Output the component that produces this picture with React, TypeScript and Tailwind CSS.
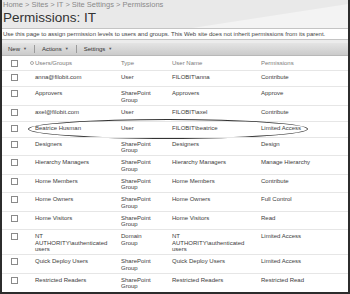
import React from 'react';

const rows = [
  { name: 'anna@filobit.com', type: 'User', user: 'FILOBIT\\anna', perm: 'Contribute' },
  { name: 'Approvers', type: 'SharePoint Group', user: 'Approvers', perm: 'Approve' },
  { name: 'axel@filobit.com', type: 'User', user: 'FILOBIT\\axel', perm: 'Contribute' },
  { name: 'Beatrice Husman', type: 'User', user: 'FILOBIT\\beatrice', perm: 'Limited Access', marked: true },
  { name: 'Designers', type: 'SharePoint Group', user: 'Designers', perm: 'Design' },
  { name: 'Hierarchy Managers', type: 'SharePoint Group', user: 'Hierarchy Managers', perm: 'Manage Hierarchy' },
  { name: 'Home Members', type: 'SharePoint Group', user: 'Home Members', perm: 'Contribute' },
  { name: 'Home Owners', type: 'SharePoint Group', user: 'Home Owners', perm: 'Full Control' },
  { name: 'Home Visitors', type: 'SharePoint Group', user: 'Home Visitors', perm: 'Read' },
  {
    name: 'NT AUTHORITY\\authenticated users',
    type: 'Domain Group',
    user: 'NT AUTHORITY\\authenticated users',
    perm: 'Limited Access',
  },
  { name: 'Quick Deploy Users', type: 'SharePoint Group', user: 'Quick Deploy Users', perm: 'Limited Access' },
  { name: 'Restricted Readers', type: 'SharePoint Group', user: 'Restricted Readers', perm: 'Restricted Read' },
];

function Checkbox() {
  return (
    <div className="w-[28px] shrink-0 pl-[9px]">
      <div className="w-[7px] h-[7px] border border-[#8a8a8a] bg-white" />
    </div>
  );
}

function Caret() {
  return <span className="ml-[3px] text-[4px] text-[#555]">▼</span>;
}

export default function App() {
  return (
    <div className="w-[350px] h-[294px] overflow-hidden bg-white border-x-2 border-b-2 border-[#2c2c2c] font-['Liberation_Sans',Arial,sans-serif] text-[#3c3c3c]">
      {/* title area */}
      <div className="relative h-[28px] bg-[#e9e9e9] overflow-hidden">
        <svg className="absolute inset-0" width="346" height="28" viewBox="0 0 346 28">
          <polygon points="190,28 346,4 346,28" fill="#f3f3f3" />
        </svg>
        <div className="relative pl-[1px]">
          <div className="text-[7.5px] leading-[9px] text-[#8a8a8a]">
            Home &gt; Sites &gt; IT &gt; Site Settings &gt; Permissions
          </div>
          <h1 className="text-[13.5px] leading-[15px] text-[#333] mt-[1px]">Permissions: IT</h1>
        </div>
      </div>

      <div className="h-[12px] border-y border-[#c4c4c4] bg-white flex items-center pl-[1px] text-[6px] text-[#444] whitespace-nowrap">
        Use this page to assign permission levels to users and groups. This Web site does not inherit permissions from its parent.
      </div>

      <div className="h-[3px] bg-[#ececec]" />

      {/* toolbar */}
      <div className="h-[13px] bg-[linear-gradient(#e4e4e4,#cbcbcb)] border-b border-[#b8b8b8] flex items-center text-[6px] text-[#333]">
        <span className="pl-[6px]">New</span>
        <Caret />
        <span className="mx-[7px] h-[8px] border-l border-[#9a9a9a]" />
        <span>Actions</span>
        <Caret />
        <span className="mx-[7px] h-[8px] border-l border-[#9a9a9a]" />
        <span>Settings</span>
        <Caret />
      </div>

      {/* table header */}
      <div className="flex items-center h-[14px] text-[6px] text-[#7a7a7a]">
        <Checkbox />
        <div className="w-[91px] shrink-0 flex items-center">
          <span className="w-[4px] h-[4px] rounded-full border border-[#aaa] mr-[1px]" />
          Users/Groups
        </div>
        <div className="w-[51px] shrink-0">Type</div>
        <div className="w-[89px] shrink-0">User Name</div>
        <div>Permissions</div>
      </div>

      {/* rows */}
      <div>
        {rows.map((r) => (
          <div
            key={r.name}
            className="relative flex items-start min-h-[16px] pt-[3px] pb-[1.5px] border-t border-[#e6e6e6] text-[6px] leading-[6.5px]"
          >
            <Checkbox />
            <div className="w-[91px] shrink-0 pl-[5px] pr-[8px]">{r.name}</div>
            <div className="w-[51px] shrink-0 pr-[17px]">{r.type}</div>
            <div className="w-[89px] shrink-0 pr-[11px]">{r.user}</div>
            <div>{r.perm}</div>
            {r.marked && (
              <div className="absolute left-[26px] top-[-3px] w-[280px] h-[20px] rounded-[50%] border border-[#333]" />
            )}
          </div>
        ))}
      </div>
    </div>
  );
}
